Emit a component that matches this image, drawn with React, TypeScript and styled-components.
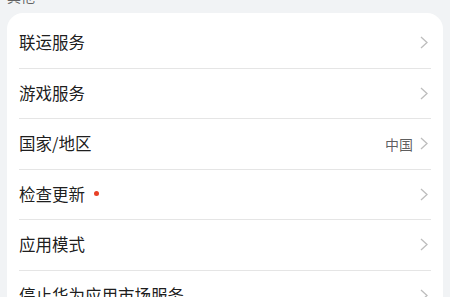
import React, {FC} from 'react';
import styled, {createGlobalStyle} from 'styled-components';

const GlobalStyle = createGlobalStyle`
  html, body {
    margin: 0;
    padding: 0;
    background: #f1f3f5;
    overflow: hidden;
  }
  body {
    font-family: "Noto Sans CJK SC", "Noto Sans", sans-serif;
  }
`;

interface Item {
  label: string;
  value?: string;
  dot?: boolean;
}

const items: Item[] = [
  {label: '联运服务'},
  {label: '游戏服务'},
  {label: '国家/地区', value: '中国'},
  {label: '检查更新', dot: true},
  {label: '应用模式'},
  {label: '停止华为应用市场服务'},
];

const Chevron: FC = () => (
  <ChevronSvg viewBox="0 0 8 13" width={8} height={13}>
    <path d="M1 1 L7 6.5 L1 12" fill="none" stroke="#bdbdbd" strokeWidth={1.3} />
  </ChevronSvg>
);

const App: FC = () => (
  <Page>
    <GlobalStyle />
    <SectionTitle>其他</SectionTitle>
    <Card>
      {items.map((item, i) => (
        <Row key={item.label} last={i === items.length - 1}>
          <Label>
            {item.label}
            {item.dot && <Dot />}
          </Label>
          <Trail>
            {item.value && <Value>{item.value}</Value>}
            <Chevron />
          </Trail>
        </Row>
      ))}
    </Card>
  </Page>
);

export default App;

const Page = styled.div`
  margin-top: -13px;
  display: flex;
  flex-direction: column;
`;

const SectionTitle = styled.div`
  padding: 0 7px;
  height: 26px;
  line-height: 19px;
  font-size: 14px;
  color: rgba(0, 0, 0, 0.6);
`;

const Card = styled.div`
  margin: 0 7px;
  background: #ffffff;
  border-radius: 16px;
  padding: 5px 12px 0;
  display: flex;
  flex-direction: column;
`;

const Row = styled.div<{last?: boolean}>`
  height: 49.5px;
  display: flex;
  align-items: center;
  justify-content: space-between;
  border-bottom: ${p => (p.last ? 'none' : '1px solid #e5e5e5')};
`;

const Label = styled.div`
  display: flex;
  align-items: center;
  font-size: 16.5px;
  line-height: 22px;
  margin-top: -1px;
  color: rgba(0, 0, 0, 0.9);
`;

const Dot = styled.span`
  width: 5px;
  height: 5px;
  border-radius: 50%;
  background: #e84026;
  margin-left: 9px;
`;

const Trail = styled.div`
  display: flex;
  align-items: center;
  gap: 7px;
  padding-right: 3px;
`;

const Value = styled.span`
  font-size: 14px;
  color: rgba(0, 0, 0, 0.65);
`;

const ChevronSvg = styled.svg`
  display: block;
`;
